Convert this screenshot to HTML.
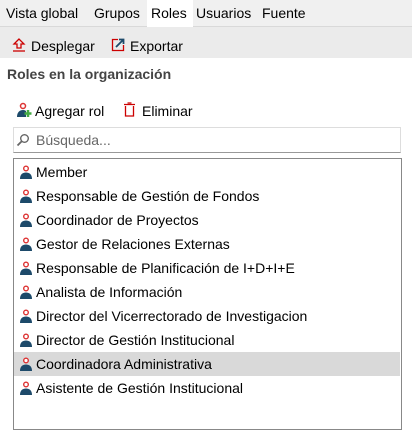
<!DOCTYPE html>
<html><head><style>
body{margin:0;width:412px;height:417px;overflow:hidden;background:#fff;font-family:"Liberation Sans",sans-serif;font-size:14px;color:#000;position:relative}
.abs{position:absolute}
.tabs{left:0;top:0;width:412px;height:26px;background:#f0f0f0;border-bottom:1px solid #d9d9d9}
.tab{position:absolute;top:5px;white-space:nowrap}
.tb{left:0;top:27px;width:412px;height:31px;background:#ebebeb}
.row{position:absolute;left:15px;width:385px;height:24px;line-height:24px;white-space:nowrap}
.row svg{position:absolute;left:4px;top:5px}
.row span{position:absolute;left:21px}
</style></head><body>
<div class="abs tabs"></div>
<div class="abs" style="left:147px;top:0;width:46px;height:27px;background:#fff"></div>
<div class="tab" style="left:6px">Vista global</div>
<div class="tab" style="left:94px">Grupos</div>
<div class="tab" style="left:151px">Roles</div>
<div class="tab" style="left:196px">Usuarios</div>
<div class="tab" style="left:262px">Fuente</div>
<div class="abs tb"></div>
<svg class="abs" style="left:12px;top:38px" width="14" height="14" viewBox="0 0 14 14"><path d="M7 1L2 6H5V10H9V6H12Z" fill="none" stroke="#c00" stroke-width="1.3"/><path d="M1 13H13" stroke="#c00" stroke-width="1.3"/></svg>
<div class="abs" style="left:31px;top:38px">Desplegar</div>
<svg class="abs" style="left:111px;top:38px" width="14" height="14" viewBox="0 0 14 14"><path d="M7 1.5H1.5V12.5H12.5V7" fill="none" stroke="#c00" stroke-width="1.3"/><path d="M5 9L12 2M8 1.5H12.5V6" fill="none" stroke="#1d4a6a" stroke-width="1.8"/></svg>
<div class="abs" style="left:130px;top:38px">Exportar</div>
<div class="abs" style="left:7px;top:66px;font-weight:bold;color:#444">Roles en la organización</div>
<svg class="abs" style="left:15px;top:102px" width="17" height="16" viewBox="0 0 17 16"><circle cx="8" cy="4" r="2.5" fill="none" stroke="#d33" stroke-width="1.5"/><path d="M2 15C2 10 5 8 8 8C10 8 11 9 11 9V15Z" fill="#1d4a6a"/><path d="M13 8V15M9.5 11.5H16.5" stroke="#4a4" stroke-width="2.5"/></svg>
<div class="abs" style="left:35px;top:103px">Agregar rol</div>
<svg class="abs" style="left:123px;top:102px" width="13" height="15" viewBox="0 0 13 15"><path d="M1 2.5H12M4.5 1H8.5M2.5 4V14H10.5V4" fill="none" stroke="#c00" stroke-width="1.3"/></svg>
<div class="abs" style="left:142px;top:103px">Eliminar</div>
<div class="abs" style="left:13px;top:127px;width:386px;height:24px;border:1px solid #ddd;border-bottom-color:#999"></div>
<svg class="abs" style="left:16px;top:133px" width="14" height="14" viewBox="0 0 14 14"><circle cx="8.5" cy="5.5" r="3.8" fill="none" stroke="#666" stroke-width="1.4"/><path d="M6 8L1.5 12.5" stroke="#666" stroke-width="1.8"/></svg>
<div class="abs" style="left:36px;top:132px;color:#666">Búsqueda...</div>
<div class="abs" style="left:13px;top:158px;width:387px;height:270px;border:1px solid #888"></div>
<div class="abs" style="left:14px;top:352px;width:386px;height:24px;background:#d9d9d9"></div>
<div id="list"></div>
<script>
var n=["Member","Responsable de Gestión de Fondos","Coordinador de Proyectos","Gestor de Relaciones Externas","Responsable de Planificación de I+D+I+E","Analista de Información","Director del Vicerrectorado de Investigacion","Director de Gestión Institucional","Coordinadora Administrativa","Asistente de Gestión Institucional"];
var h="";n.forEach(function(t,i){h+='<div class="row" style="top:'+(160+i*24)+'px"><svg width="14" height="14" viewBox="0 0 14 14"><circle cx="7" cy="3.5" r="2.3" fill="#fff" stroke="#d33" stroke-width="1.4"/><path d="M1 14C1 9 4 7.5 7 7.5S13 9 13 14Z" fill="#1d4a6a"/></svg><span>'+t+'</span></div>'});
document.getElementById("list").innerHTML=h;
</script>
</body></html>
